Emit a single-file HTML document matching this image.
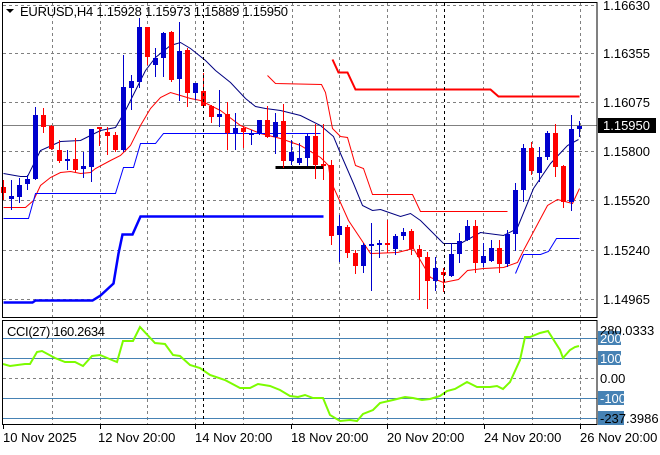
<!DOCTYPE html>
<html><head><meta charset="utf-8"><style>
html,body{margin:0;padding:0;background:#fff;}
body{width:660px;height:450px;overflow:hidden;font-family:"Liberation Sans",sans-serif;}
svg text{font-family:"Liberation Sans",sans-serif;font-size:13px;fill:#000;}
</style></head><body>
<svg id="s" width="660" height="450" xmlns="http://www.w3.org/2000/svg">
<rect width="660" height="450" fill="#fff"/>
<g id="grid" stroke="#808080" stroke-dasharray="3,3" stroke-width="1"></g>
<line x1="2" y1="125.5" x2="597" y2="125.5" stroke="#808080"/>
<g id="lines" fill="none"></g>
<g id="candles"></g>
<g stroke="#4682b4" stroke-width="1">
<line x1="2" y1="338.5" x2="597" y2="338.5"/>
<line x1="2" y1="358.5" x2="597" y2="358.5"/>
<line x1="2" y1="398.5" x2="597" y2="398.5"/>
<line x1="2" y1="418.5" x2="597" y2="418.5"/>
</g>
<polyline id="cci" fill="none" stroke="#7cfc00" stroke-width="2"/>
<line x1="203.5" y1="3" x2="203.5" y2="317" stroke="#000" stroke-dasharray="3,3"/>
<line x1="203.5" y1="320" x2="203.5" y2="424" stroke="#000" stroke-dasharray="3,3"/>
<line x1="444.5" y1="3" x2="444.5" y2="317" stroke="#000" stroke-dasharray="3,3"/>
<line x1="444.5" y1="320" x2="444.5" y2="424" stroke="#000" stroke-dasharray="3,3"/>
<rect x="2.5" y="2.5" width="594.5" height="315" fill="none" stroke="#000"/>
<rect x="2.5" y="320.5" width="594.5" height="104" fill="none" stroke="#000"/>
<g id="ticks" stroke="#000"></g>
<polygon points="6,9 14,9 10,13" fill="#000"/>
<text x="20" y="16" textLength="268" lengthAdjust="spacing">EURUSD,H4  1.15928 1.15973 1.15889 1.15950</text>
<text x="7" y="336" textLength="98" lengthAdjust="spacing">CCI(27) 160.2634</text>
<text x="603" y="10">1.16630</text>
<text x="603" y="58">1.16355</text>
<text x="603" y="107">1.16075</text>
<rect x="598" y="118" width="58" height="15" fill="#000"/>
<text x="603" y="130" style="fill:#fff">1.15950</text>
<text x="603" y="156">1.15800</text>
<text x="603" y="205">1.15520</text>
<text x="603" y="255">1.15240</text>
<text x="603" y="304">1.14965</text>
<rect x="598" y="331" width="23" height="14" fill="#4682b4"/>
<rect x="598" y="351" width="23" height="14" fill="#4682b4"/>
<rect x="598" y="391" width="26" height="14" fill="#4682b4"/>
<rect x="598" y="411" width="26" height="14" fill="#4682b4"/>
<text x="600" y="335">280.0333</text>
<text x="600" y="343" style="fill:#fff">200</text>
<text x="600" y="363" style="fill:#fff">100</text>
<text x="600" y="383">0.00</text>
<text x="600" y="403" style="fill:#fff">-100</text>
<text x="600" y="423">-237.3986</text>
<text x="3" y="442">10 Nov 2025</text>
<text x="98" y="442">12 Nov 20:00</text>
<text x="195" y="442">14 Nov 20:00</text>
<text x="291" y="442">18 Nov 20:00</text>
<text x="387" y="442">20 Nov 20:00</text>
<text x="484" y="442">24 Nov 20:00</text>
<text x="580" y="442">26 Nov 20:00</text>
</svg>
<script>
var NS="http://www.w3.org/2000/svg";
function el(p,t,a){var e=document.createElementNS(NS,t);for(var k in a)e.setAttribute(k,a[k]);p.appendChild(e);return e;}
var g=document.getElementById('grid');
[5,53,102,151,200,250,299].forEach(function(y){el(g,'line',{x1:3,x2:597,y1:y+.5,y2:y+.5});});
el(g,'line',{x1:3,x2:597,y1:378.5,y2:378.5});
var vx=[52,100,147,195,243,292,339,387,436,483,532,580];
vx.forEach(function(x){el(g,'line',{x1:x+.5,x2:x+.5,y1:3,y2:317});el(g,'line',{x1:x+.5,x2:x+.5,y1:321,y2:424});});
var tk=document.getElementById('ticks');
[3,100,195,291,387,484,580].forEach(function(x){el(tk,'line',{x1:x+.5,x2:x+.5,y1:425,y2:429});});
var L=document.getElementById('lines');
function pl(pts,c,w){el(L,'polyline',{points:pts.map(function(p){return (p[0]+.5)+','+(p[1]+.5)}).join(' '),stroke:c,'stroke-width':w});}
pl([[3,173],[20,176],[27,176],[35,160],[40,150],[60,141],[80,140],[90,135],[100,130],[115,127],[125,110],[135,90],[145,70],[155,57],[170,45],[180,42],[190,48],[205,60],[215,70],[230,82],[245,98],[255,106],[265,108],[280,110],[300,115],[320,125],[333,136],[340,153],[353,183],[362,205],[372,210],[380,209],[400,216],[410,213],[420,220],[443,243],[460,243],[480,232],[503,235],[513,230],[517,227],[533,188],[550,163],[567,145],[578,139]],'#000080',1);
pl([[3,207],[25,207],[33,200],[40,185],[50,177],[60,172],[70,171],[80,173],[90,172],[95,168],[110,160],[120,155],[130,145],[140,125],[150,108],[160,97],[170,92],[180,95],[190,98],[200,100],[220,110],[240,125],[260,133],[280,138],[300,145],[320,157],[328,165],[330,180],[348,220],[370,253],[397,252],[413,248],[430,277],[443,282],[458,279],[467,270],[483,268],[503,267],[517,262],[523,250],[547,205],[557,199],[572,203],[579,188]],'#ff0000',1);
pl([[267,75],[275,83],[321,84],[325,92],[332,128],[340,136],[347,137],[355,165],[363,168],[372,194],[412,194],[420,211],[507,211]],'#ff0000',1);
pl([[332,59],[338,72],[347,72],[355,89],[490,89],[498,96],[579,96]],'#ff0000',2);
pl([[3,218],[28,218],[35,193],[115,193],[123,167],[133,167],[140,143],[155,143],[163,133],[320,133]],'#0000ff',1);
pl([[515,273],[523,254],[540,254],[548,251],[556,238],[579,238]],'#0000ff',1);
pl([[3,302],[32,302],[35,300],[92,300],[100,295],[113,283],[118,253],[122,234],[132,234],[140,216],[323,216]],'#0000ff',2.5);
pl([[275,167],[323,167]],'#000',3);
var C=[[3,187,193,180,200,'r'],[11,196,199,180,210,'b'],[19,185,197,178,203,'b'],[27,179,184,175,190,'b'],[35,115,179,107,180,'b'],[43,115,127,108,133,'r'],[51,126,149,125,150,'r'],[59,150,161,140,163,'r'],[67,159,161,150,170,'b'],[75,159,170,138,172,'r'],[83,166,169,152,178,'b'],[91,129,167,129,182,'b'],[99,127,129,127,146,'r'],[107,132,136,127,155,'r'],[115,135,150,132,152,'r'],[123,87,150,55,152,'b'],[131,81,88,75,110,'b'],[139,27,82,18,88,'b'],[147,27,57,27,65,'r'],[155,58,65,48,77,'b'],[163,33,58,32,77,'b'],[171,32,80,31,82,'r'],[179,51,79,22,101,'b'],[187,50,93,48,107,'r'],[195,83,93,83,100,'b'],[203,91,106,73,108,'r'],[211,106,117,105,123,'r'],[219,114,117,90,127,'b'],[227,114,133,102,150,'r'],[235,128,133,113,150,'b'],[243,128,132,126,148,'r'],[251,133,135,130,145,'b'],[259,120,133,120,135,'b'],[267,120,137,106,138,'r'],[275,122,137,113,154,'b'],[283,121,161,104,168,'r'],[291,152,161,140,165,'b'],[299,158,163,143,165,'b'],[307,136,158,134,166,'b'],[315,136,165,124,179,'r'],[323,164,166,124,180,'r'],
[331,165,236,160,245,'r'],[339,226,235,215,262,'b'],[347,227,253,225,258,'r'],[355,253,266,250,274,'r'],[363,245,266,243,273,'b'],[371,244,246,223,291,'b'],[379,243,245,240,258,'b'],[387,243,245,220,253,'r'],[395,236,249,234,255,'b'],[403,232,236,228,240,'b'],[411,231,249,229,255,'r'],[419,249,257,245,300,'r'],[427,257,281,252,309,'r'],[435,268,281,257,291,'b'],[443,272,275,268,292,'r'],[451,254,276,243,277,'b'],[459,241,254,233,263,'b'],[467,226,240,220,241,'b'],[475,226,263,220,273,'r'],[483,256,263,243,267,'b'],[491,248,261,240,262,'b'],[499,248,264,240,273,'r'],[507,234,264,230,267,'b'],[515,190,234,183,251,'b'],[523,148,190,144,202,'b'],[531,148,171,142,175,'r'],[539,157,173,147,182,'b'],[547,133,157,131,160,'b'],[555,133,167,124,177,'r'],[563,166,202,165,208,'r'],[571,129,202,115,211,'b'],[579,126,129,121,137,'b']];
var G=document.getElementById('candles');
C.forEach(function(c){var col=c[5]=='b'?'#0000cd':'#ff0000';
el(G,'line',{x1:c[0]+.5,x2:c[0]+.5,y1:c[3],y2:c[4],stroke:col});
el(G,'rect',{x:c[0]-2,y:c[1],width:5,height:Math.max(c[2]-c[1],2),fill:col});});
var cci=[[3,364],[10,366],[25,364],[30,364],[37,352],[42,351],[55,358],[65,362],[75,362],[83,366],[92,356],[100,355],[112,360],[117,362],[123,341],[133,341],[140,327],[155,343],[165,344],[173,355],[180,356],[190,365],[200,368],[210,375],[225,380],[240,388],[250,388],[258,384],[270,386],[280,390],[290,396],[298,397],[305,395],[313,398],[323,398],[330,415],[340,421],[350,420],[357,421],[363,414],[373,410],[380,403],[393,400],[405,397],[413,398],[422,400],[430,399],[440,396],[447,391],[455,389],[467,382],[477,387],[490,387],[497,386],[503,389],[510,382],[520,360],[525,337],[530,337],[540,333],[548,331],[560,350],[563,358],[570,350],[575,347],[579,346]];
document.getElementById('cci').setAttribute('points',cci.map(function(p){return p.join(',')}).join(' '));
</script>
</body></html>
